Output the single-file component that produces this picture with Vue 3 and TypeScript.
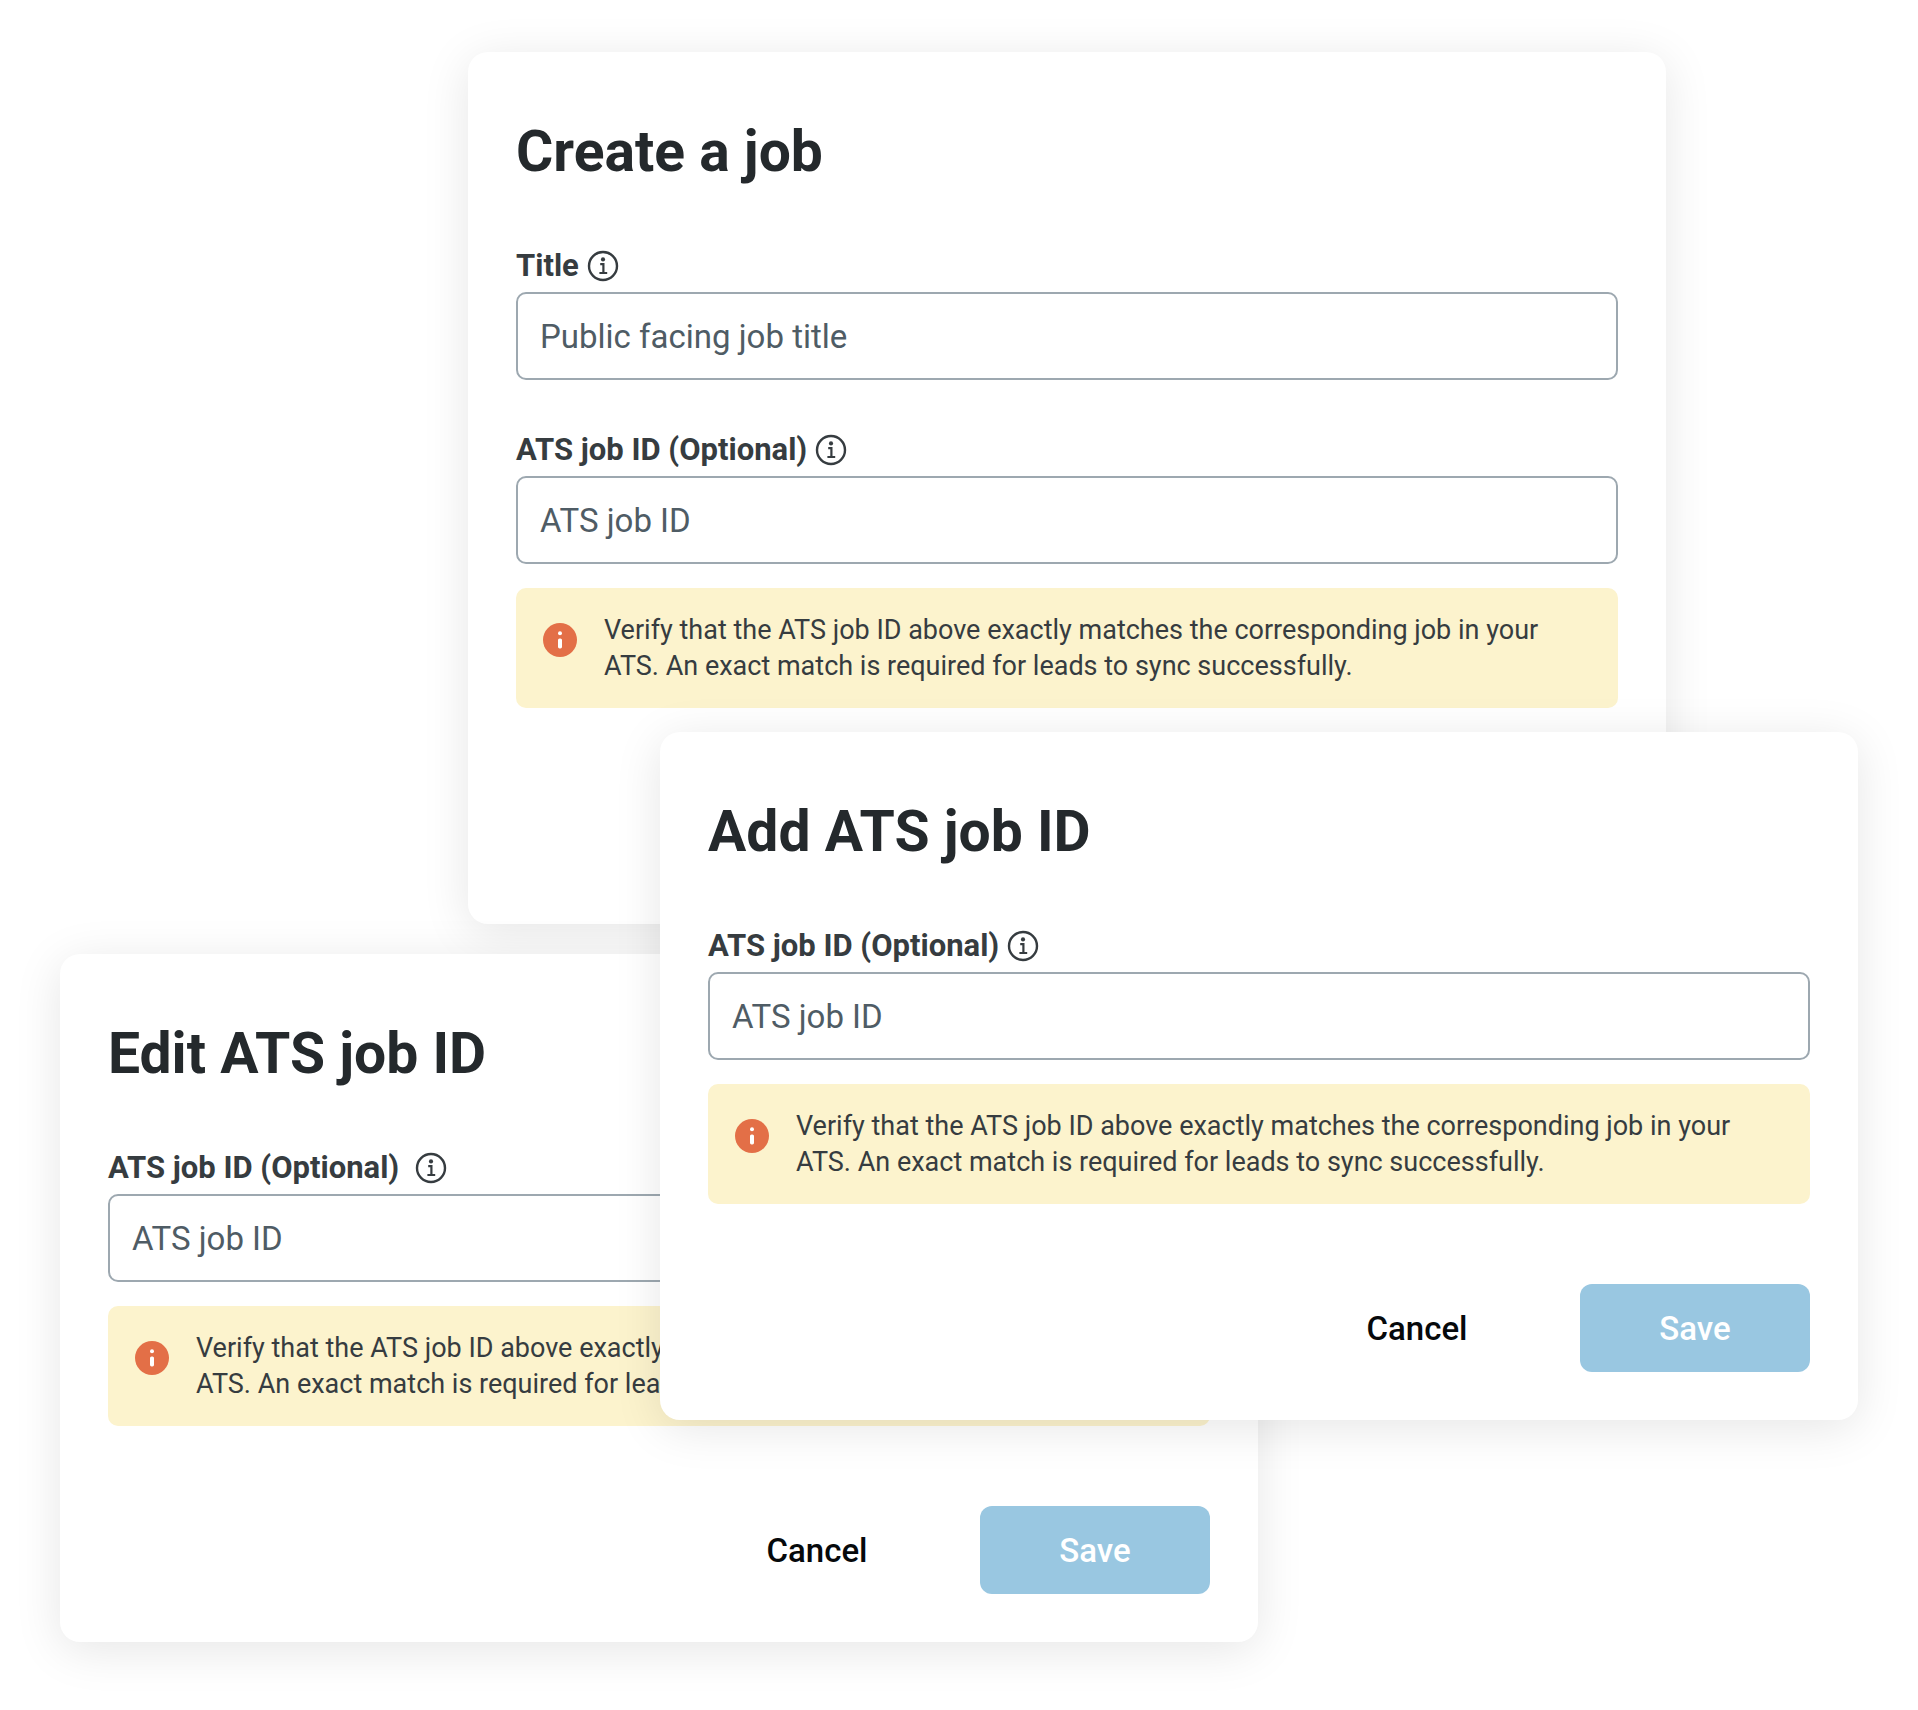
<script setup lang="ts">
interface Field {
  id: string
  label: string
  placeholder: string
}

interface Dialog {
  key: string
  heading: string
  fields: Field[]
  actions: boolean
}

const notice =
  'Verify that the ATS job ID above exactly matches the corresponding job in your ATS. An exact match is required for leads to sync successfully.'

const dialogs: Dialog[] = [
  {
    key: 'create',
    heading: 'Create a job',
    fields: [
      { id: 'create-title', label: 'Title', placeholder: 'Public facing job title' },
      { id: 'create-ats', label: 'ATS job ID (Optional)', placeholder: 'ATS job ID' },
    ],
    actions: false,
  },
  {
    key: 'edit',
    heading: 'Edit ATS job ID',
    fields: [{ id: 'edit-ats', label: 'ATS job ID (Optional)', placeholder: 'ATS job ID' }],
    actions: true,
  },
  {
    key: 'add',
    heading: 'Add ATS job ID',
    fields: [{ id: 'add-ats', label: 'ATS job ID (Optional)', placeholder: 'ATS job ID' }],
    actions: true,
  },
]
</script>

<template>
  <main class="stage">
    <section v-for="d in dialogs" :key="d.key" class="card" :class="d.key">
      <h1 class="heading">{{ d.heading }}</h1>
      <form class="form" @submit.prevent>
        <div v-for="f in d.fields" :key="f.id" class="field">
          <div class="label-row">
            <label class="label" :for="f.id">{{ f.label }}</label>
            <svg class="hint" viewBox="0 0 32 32" aria-hidden="true">
              <circle cx="16" cy="16" r="14" fill="none" stroke="currentColor" stroke-width="2.4" />
              <circle cx="16" cy="9.4" r="2.1" fill="currentColor" />
              <path
                d="M13.2 14.2H16.4V23M12.4 23H20.2"
                fill="none"
                stroke="currentColor"
                stroke-width="2.2"
              />
            </svg>
          </div>
          <input :id="f.id" class="input" type="text" :placeholder="f.placeholder" />
        </div>
        <div class="notice">
          <svg class="notice-icon" viewBox="0 0 40 40" aria-hidden="true">
            <circle cx="20" cy="20" r="17" fill="#e36f47" />
            <circle cx="20" cy="13.3" r="2" fill="#fff" />
            <rect x="18" y="18.4" width="4" height="10" rx="1.6" fill="#fff" />
          </svg>
          <p class="notice-text">{{ notice }}</p>
        </div>
        <div class="actions">
          <template v-if="d.actions">
            <button class="button cancel" type="button">Cancel</button>
            <button class="button save" type="submit">Save</button>
          </template>
        </div>
      </form>
    </section>
  </main>
</template>

<style>
body {
  margin: 0;
  background: #fff;
}
</style>

<style scoped>
.stage {
  display: grid;
  grid-template-columns: 408fr 192fr 598fr 408fr 192fr;
  align-items: start;
  padding: 52px 60px 68px;
  overflow: hidden;
  font-family: Roboto, 'Liberation Sans', sans-serif;
}

/* The three cards share one grid row and overlap, later ones on top. */
.card {
  grid-row: 1;
  box-sizing: border-box;
  padding: 62px 48px 48px;
  border-radius: 20px;
  background: #fff;
  box-shadow: 0 8px 48px rgba(0, 0, 0, 0.1);
}

.create {
  grid-column: 2 / 5;
}

.edit {
  grid-column: 1 / 4;
  margin-top: 902px;
}

.add {
  grid-column: 3 / 6;
  margin-top: 680px;
}

.heading {
  margin: 0 0 56px;
  font-size: 57px;
  line-height: 76px;
  font-weight: 700;
  color: #24292c;
}

.form {
  display: flex;
  flex-direction: column;
}

.field {
  display: flex;
  flex-direction: column;
  gap: 6px;
}

.field + .field {
  margin-top: 50px;
}

.label-row {
  display: flex;
  align-items: center;
  gap: 8px;
  height: 40px;
  color: #363c40;
}

.edit .label-row {
  gap: 16px;
}

.label {
  font-size: 31px;
  line-height: 40px;
  font-weight: 700;
}

.hint {
  width: 32px;
  height: 32px;
}

.input {
  box-sizing: border-box;
  width: 100%;
  height: 88px;
  padding: 0 22px;
  border: 2px solid #9da8b0;
  border-radius: 10px;
  background: #fff;
  font-family: inherit;
  font-size: 33px;
  color: #4f5c65;
}

.input::placeholder {
  color: #4f5c65;
  opacity: 1;
}

.notice {
  display: flex;
  gap: 24px;
  margin-top: 24px;
  padding: 24px;
  border-radius: 10px;
  background: #fcf3cd;
}

.notice-icon {
  flex: none;
  width: 40px;
  height: 40px;
  margin-top: 8px;
}

.notice-text {
  margin: 0;
  font-size: 27px;
  line-height: 36px;
  color: #363c40;
}

.actions {
  display: flex;
  justify-content: flex-end;
  gap: 48px;
  min-height: 88px;
  margin-top: 80px;
}

.button {
  width: 230px;
  height: 88px;
  padding: 0;
  border: 0;
  border-radius: 12px;
  background: transparent;
  font-family: inherit;
  font-size: 33px;
  font-weight: 500;
  cursor: pointer;
}

.cancel {
  color: #06090b;
}

.save {
  background: #99c7e1;
  color: #fff;
}
</style>
